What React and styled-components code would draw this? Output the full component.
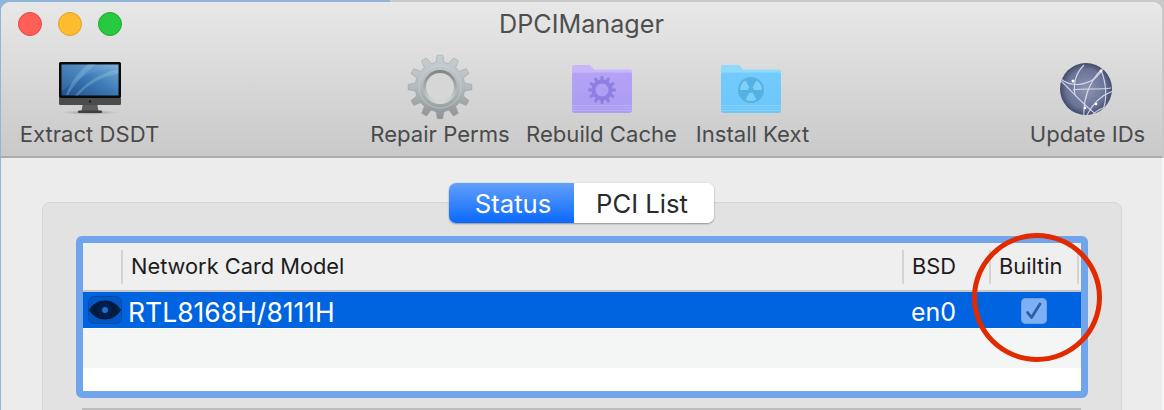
import React from 'react';
import styled, { createGlobalStyle } from 'styled-components';

const Global = createGlobalStyle`
  html, body { margin: 0; padding: 0; background: #dfe3e6; }
  body { font-family: Inter, "Liberation Sans", sans-serif; -webkit-font-smoothing: antialiased; }
`;

const Page = styled.div`
  position: relative;
  width: 1164px;
  height: 410px;
  overflow: hidden;
  padding: 2px 2px 0 1px;
  box-sizing: border-box;
  background: linear-gradient(90deg, #8fb6d8 0, #8fb6d8 390px, #c9c9c9 390px, #c9c9c9 100%);
`;
const Win = styled.div`
  height: 420px;
  background: #ececec;
  border-radius: 9px 9px 0 0;
  overflow: hidden;
`;
const Chrome = styled.header`
  height: 156px;
  box-sizing: border-box;
  background: linear-gradient(180deg, #e8e8e8 0, #c9c9c9 100%);
  border-bottom: 2px solid #acacac;
  display: flex;
  flex-direction: column;
`;
const TitleBar = styled.div`
  position: relative;
  height: 44px;
  flex: none;
  display: flex;
  align-items: center;
  justify-content: center;
`;
const Lights = styled.div`
  position: absolute;
  left: 17px;
  top: 10px;
  display: flex;
  gap: 16px;
`;
const Light = styled.span`
  width: 24px;
  height: 24px;
  box-sizing: border-box;
  border-radius: 50%;
  background: ${p => p.$c};
  border: 1px solid ${p => p.$b};
`;
const Title = styled.h1`
  margin: 0;
  font-size: 25.2px;
  font-weight: 400;
  color: #4f4f4f;
`;
const Toolbar = styled.div`
  display: flex;
  align-items: flex-start;
  padding: 16px 0 0 19px;
`;
const Group = styled.div`
  display: flex;
  gap: ${p => p.$gap || 0}px;
  margin-left: ${p => p.$ml || 0}px;
`;
const Tool = styled.div`
  width: ${p => p.$w}px;
  display: flex;
  flex-direction: column;
  align-items: center;
`;
const IconBox = styled.div`
  height: 54px;
  display: flex;
  align-items: center;
  justify-content: center;
`;
const ToolLabel = styled.span`
  margin-top: 5px;
  padding-left: ${p => p.$nudge || 0}px;
  font-size: 22.1px;
  line-height: 26px;
  color: #4a4a4a;
  white-space: nowrap;
`;
const Content = styled.main`
  padding: 44px 40px 0 41px;
`;
const Panel = styled.section`
  border: 1px solid #d5d5d5;
  border-radius: 8px;
  background: #e2e2e2;
  padding: 0 33px;
  height: 260px;
  display: flex;
  flex-direction: column;
`;
const Tabs = styled.div`
  align-self: center;
  margin: -20px 0 13px -1px;
  display: flex;
  height: 40px;
  width: 265px;
  border-radius: 7px;
  overflow: hidden;
  background: #fff;
  box-shadow: 0 1px 2px rgba(0,0,0,.35), 0 0 1px rgba(0,0,0,.2);
  flex: none;
`;
const Tab = styled.div`
  width: ${p => p.$w}px;
  box-sizing: border-box;
  display: flex;
  align-items: center;
  justify-content: center;
  padding: ${p => (p.$on ? '0 0 0 3px' : '0 4px 0 0')};
  font-size: 25.7px;
  color: ${p => (p.$on ? '#fff' : '#2a2a2a')};
  background: ${p => (p.$on ? 'linear-gradient(180deg,#62a0fb 0,#0a68fb 100%)' : '#fff')};
`;
const TableFrame = styled.div`
  height: 162px;
  flex: none;
  box-sizing: border-box;
  border: 7px solid #70a5ec;
  border-radius: 6px;
  background: #fff;
  overflow: hidden;
`;
const cols = '38px 781px 87px 92px';
const Header = styled.div`
  display: grid;
  grid-template-columns: ${cols};
  height: 49px;
  box-sizing: border-box;
  background: #efefef;
  border-bottom: 2px solid #c6c6c6;
  align-items: center;
`;
const HeadCell = styled.div`
  position: relative;
  height: 34px;
  padding: 0 0 2px 8px;
  box-sizing: border-box;
  border-left: ${p => (p.$bare ? 'none' : '2px solid #d4d4d4')};
  display: flex;
  align-items: center;
  font-size: 21.8px;
  color: #1c1c1c;
  white-space: nowrap;
`;
const EndRule = styled.span`
  position: absolute;
  right: 2px;
  top: 0;
  bottom: 0;
  width: 2px;
  background: #d4d4d4;
`;
const Row = styled.div`
  display: grid;
  grid-template-columns: ${cols};
  height: 36px;
  background: #0064e1;
  align-items: center;
  color: #fff;
`;
const EyeCell = styled.div`
  display: flex;
  padding-left: 5px;
`;
const EyeBox = styled.div`
  width: 35px;
  height: 28px;
  box-sizing: border-box;
  border: 1px solid #0a4a9e;
  border-radius: 6px;
  background: #0058c8;
  display: flex;
  align-items: center;
  justify-content: center;
`;
const NameCell = styled.div`
  margin-left: 7px;
  padding-top: 3px;
  font-size: 26.5px;
  white-space: nowrap;
`;
const BsdCell = styled.div`
  padding: 3px 0 0 9px;
  font-size: 25px;
`;
const CheckCell = styled.div`
  display: flex;
  padding: 1px 0 0 32px;
`;
const Check = styled.div`
  width: 26px;
  height: 26px;
  border-radius: 5px;
  background: #7db1f3;
  box-shadow: inset 0 0 0 1px #6a9fe6;
  display: flex;
  align-items: center;
  justify-content: center;
`;
const Stripe = styled.div`
  height: 39px;
  margin-top: 1px;
  background: #f4f5f5;
`;
const Below = styled.div`
  margin: 10px 7px 0 6px;
  height: 3px;
  background: #bdbdbd;
  flex: none;
`;
const Ring = styled.div`
  position: absolute;
  left: 972px;
  top: 233px;
  width: 130px;
  height: 129px;
  box-sizing: border-box;
  border: 5px solid #e12a00;
  border-radius: 50%;
`;
const Edge = styled.div`
  position: absolute;
  right: 0;
  top: 158px;
  bottom: 0;
  width: 2px;
  background: #f6f6f6;
`;

const IMac = () => (
  <svg width="64" height="54" viewBox="0 0 64 54">
    <defs>
      <linearGradient id="scr" x1="0" y1="1" x2="1" y2="0">
        <stop offset="0" stopColor="#1d4f8c" />
        <stop offset="0.55" stopColor="#3f7cb8" />
        <stop offset="1" stopColor="#79add7" />
      </linearGradient>
      <radialGradient id="shd" cx="0.5" cy="0.5" r="0.5">
        <stop offset="0" stopColor="#777" />
        <stop offset="1" stopColor="#bbb" stopOpacity="0" />
      </radialGradient>
    </defs>
    <ellipse cx="32" cy="50.5" rx="31" ry="2.5" fill="url(#shd)" />
    <path d="M25 41h14l1.500 8h-17z" fill="#5c5c5c" />
    <rect x="20" y="48.500" width="24" height="2.500" rx="1" fill="#3f3f3f" />
    <rect x="1" y="0" width="62" height="36" rx="1.500" fill="#0a0a0a" />
    <path d="M1 36h62v5.500a1.500 1.500 0 0 1-1.500 1.500h-59a1.500 1.500 0 0 1-1.500-1.500z" fill="#4b4b4d" />
    <circle cx="32" cy="39.500" r="1" fill="#0c0c0c" />
    <rect x="3.500" y="2.500" width="57" height="31" fill="url(#scr)" />
    <path d="M10 33c6-10 14-20 28-30.500h-8C20 10 13 20 8 33z" fill="#9cc8e6" opacity=".35" />
    <path d="M20 33.500c8-9 20-18 40.500-22V7C42 11 28 20 17 33.500z" fill="#a9d3ee" opacity=".28" />
    <path d="M3.500 2.500h57v4C40 6 20 14 3.500 30z" fill="#8fc0e2" opacity=".15" />
  </svg>
);

const gearPath = (cx, cy, ro, ri, teeth) => {
  const pts = [];
  const step = (Math.PI * 2) / teeth;
  for (let i = 0; i < teeth; i++) {
    const a = i * step - Math.PI / 2;
    const at = (r, d) => `${(cx + r * Math.cos(a + d * step)).toFixed(2)} ${(cy + r * Math.sin(a + d * step)).toFixed(2)}`;
    pts.push(at(ri, -0.3), at(ro, -0.17), at(ro, 0.17), at(ri, 0.3));
  }
  return `M${pts.join('L')}Z`;
};

const BigGear = () => (
  <svg width="66" height="66" viewBox="0 0 66 66" style={{ margin: '-8px 0 -4px' }}>
    <defs>
      <linearGradient id="g1" x1="0" y1="0" x2="0" y2="1">
        <stop offset="0" stopColor="#c8cfd3" />
        <stop offset="0.5" stopColor="#b4babd" />
        <stop offset="1" stopColor="#8d9193" />
      </linearGradient>
      <linearGradient id="g2" x1="0" y1="0" x2="0" y2="1">
        <stop offset="0" stopColor="#7d8285" />
        <stop offset="1" stopColor="#d8dbdc" />
      </linearGradient>
    </defs>
    <path d={gearPath(33, 33, 32, 25, 12)} fill="url(#g1)" stroke="#9a9fa1" strokeWidth=".5" strokeLinejoin="round" />
    <circle cx="33" cy="33" r="17" fill="url(#g2)" />
    <circle cx="33" cy="33" r="14" fill="#d6d6d6" />
    <circle cx="33" cy="33" r="21" fill="none" stroke="#d8dcde" strokeWidth=".8" opacity=".6" />
  </svg>
);

const Folder = ({ back, front, stripe, id, children }) => (
  <svg width="62" height="50" viewBox="0 0 62 50">
    <defs>
      <linearGradient id={id} x1="0" y1="0" x2="0" y2="1">
        <stop offset="0" stopColor={front[0]} />
        <stop offset="1" stopColor={front[1]} />
      </linearGradient>
    </defs>
    <path d="M1 3a2 2 0 0 1 2-2h16l4 4.500h36a2 2 0 0 1 2 2V12H1z" fill={back} />
    <path d="M1 10.500a2 2 0 0 1 2-2h56a2 2 0 0 1 2 2V46a3 3 0 0 1-3 3H4a3 3 0 0 1-3-3z" fill={`url(#${id})`} />
    <path d="M1 41.500h60M1 44h60M1 46.500h60" stroke={stripe} strokeWidth=".8" opacity=".8" />
    {children}
  </svg>
);

const Globe = () => (
  <svg width="54" height="54" viewBox="0 0 54 54">
    <defs>
      <radialGradient id="gb" cx="0.5" cy="0.5" r="0.58">
        <stop offset="0" stopColor="#8f96b2" />
        <stop offset="0.65" stopColor="#6a7498" />
        <stop offset="1" stopColor="#2a3150" />
      </radialGradient>
      <clipPath id="gc"><circle cx="27" cy="27" r="26" /></clipPath>
    </defs>
    <circle cx="27" cy="27" r="26" fill="url(#gb)" />
    <g clipPath="url(#gc)" fill="none" stroke="#e6e9f5" strokeWidth="1.100" opacity=".85">
      <path d="M2 17c12 10 34 6 42-11" />
      <path d="M2 19c10 9 22 24 36 34" />
      <path d="M42 8C30 20 24 38 25 54" />
      <path d="M42 8c5 12 7 30 1 42" />
      <path d="M25 3c-8 8-11 18-9 30" />
      <path d="M14 28c10-2 24 0 38-2" />
      <path d="M28 53c6-12 15-20 26-24" />
      <path d="M33 53c5-5 12-8 20-10" />
    </g>
    <circle cx="14" cy="19" r="1.500" fill="#fff" />
    <circle cx="42" cy="9" r="1.500" fill="#fff" />
    <circle cx="26" cy="46" r="1.300" fill="#fff" />
    <circle cx="37" cy="42" r="1.300" fill="#fff" />
  </svg>
);

const Eye = () => (
  <svg width="32" height="20" viewBox="0 0 32 20">
    <path d="M0 10C4 3.500 9.500 .5 16 .5S28 3.500 32 10c-4 6.500-9.500 9.500-16 9.500S4 16.500 0 10z" fill="#001a40" />
    <circle cx="16" cy="10" r="7.300" fill="#00214f" />
    <circle cx="16" cy="10" r="3" fill="#1e6fd0" />
  </svg>
);

const CheckMark = () => (
  <svg width="18" height="18" viewBox="0 0 18 18">
    <path d="M2.500 10.500l4 5L15 2" fill="none" stroke="#2b5fa8" strokeWidth="2.800" strokeLinecap="round" strokeLinejoin="round" />
  </svg>
);

const wedge = (cx, cy, r0, r1, deg) => {
  const p = (r, d) => {
    const a = ((d - 90) * Math.PI) / 180;
    return `${(cx + r * Math.cos(a)).toFixed(2)} ${(cy + r * Math.sin(a)).toFixed(2)}`;
  };
  return `M${p(r0, deg - 30)}L${p(r1, deg - 30)}A${r1} ${r1} 0 0 1 ${p(r1, deg + 30)}L${p(r0, deg + 30)}A${r0} ${r0} 0 0 0 ${p(r0, deg - 30)}Z`;
};

export default function App() {
  return (
    <>
      <Global />
      <Page>
        <Win>
          <Chrome>
            <TitleBar>
              <Lights>
                <Light $c="#ff5f57" $b="#e2483f" />
                <Light $c="#febc2e" $b="#e0a02a" />
                <Light $c="#28c840" $b="#1faa30" />
              </Lights>
              <Title>DPCIManager</Title>
            </TitleBar>
            <Toolbar>
              <Tool $w={139}>
                <IconBox><IMac /></IconBox>
                <ToolLabel>Extract DSDT</ToolLabel>
              </Tool>
              <Group $ml={212} $gap={18}>
                <Tool $w={138}>
                  <IconBox><BigGear /></IconBox>
                  <ToolLabel>Repair Perms</ToolLabel>
                </Tool>
                <Tool $w={149}>
                  <IconBox>
                    <Folder id="fp" back="#c7b6fb" front={['#b3a2f5', '#ac9cf2']} stripe="#c3b5f8">
                      <path d={gearPath(31, 26, 14, 10.500, 12)} fill="#8e7fe0" />
                      <circle cx="31" cy="26" r="6.500" fill="#b0a0f4" />
                    </Folder>
                  </IconBox>
                  <ToolLabel>Rebuild Cache</ToolLabel>
                </Tool>
                <Tool $w={113}>
                  <IconBox>
                    <Folder id="fb" back="#8fd9fd" front={['#72cbfb', '#6cc6fa']} stripe="#93daf9">
                      <circle cx="31" cy="26" r="13" fill="#55b0e4" />
                      <path d={wedge(31, 26, 3, 11, 60)} fill="#7fd0f9" />
                      <path d={wedge(31, 26, 3, 11, 180)} fill="#7fd0f9" />
                      <path d={wedge(31, 26, 3, 11, 300)} fill="#7fd0f9" />
                    </Folder>
                  </IconBox>
                  <ToolLabel $nudge={4}>Install Kext</ToolLabel>
                </Tool>
              </Group>
              <Group $ml={221}>
                <Tool $w={115}>
                  <IconBox><Globe /></IconBox>
                  <ToolLabel $nudge={4}>Update IDs</ToolLabel>
                </Tool>
              </Group>
            </Toolbar>
          </Chrome>
          <Content>
            <Panel>
              <Tabs>
                <Tab $on $w={125}>Status</Tab>
                <Tab $w={140}>PCI List</Tab>
              </Tabs>
              <TableFrame>
                <Header>
                  <HeadCell $bare />
                  <HeadCell>Network Card Model</HeadCell>
                  <HeadCell>BSD</HeadCell>
                  <HeadCell>Builtin<EndRule /></HeadCell>
                </Header>
                <Row>
                  <EyeCell><EyeBox><Eye /></EyeBox></EyeCell>
                  <NameCell>RTL8168H/8111H</NameCell>
                  <BsdCell>en0</BsdCell>
                  <CheckCell><Check><CheckMark /></Check></CheckCell>
                </Row>
                <Stripe />
              </TableFrame>
              <Below />
            </Panel>
          </Content>
        </Win>
        <Edge />
        <Ring />
      </Page>
    </>
  );
}
